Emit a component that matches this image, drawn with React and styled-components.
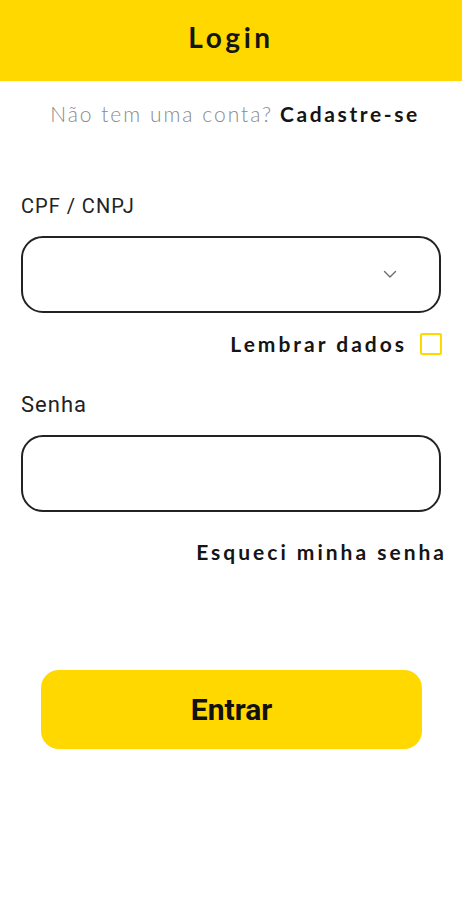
import React from 'react';
import styled, { createGlobalStyle } from 'styled-components';

const GlobalStyle = createGlobalStyle`
	html, body {
		margin: 0;
		padding: 0;
		background: #fff;
	}
	* {
		box-sizing: border-box;
	}
`;

function Chevron() {
	return (
		<svg width="14" height="9" viewBox="0 0 14 9" fill="none">
			<path d="M1.5 1.5L7 7l5.5-5.5" stroke="#6b6b6b" strokeWidth="1.4" strokeLinecap="round" strokeLinejoin="round" />
		</svg>
	);
}

function App() {
	return (
		<Root>
			<GlobalStyle />
			<Header>
				<h1>Login</h1>
			</Header>
			<SignUp>
				<span className="muted">Não tem uma conta?</span>
				<span className="link">Cadastre-se</span>
			</SignUp>
			<Form>
				<Label $top={68} $size={20}>CPF / CNPJ</Label>
				<Field>
					<Chevron />
				</Field>
				<Remember>
					<span>Lembrar dados</span>
					<CheckBox />
				</Remember>
				<Label $top={38} $size={22}>Senha</Label>
				<Field />
				<Forgot>Esqueci minha senha</Forgot>
			</Form>
			<Submit>Entrar</Submit>
		</Root>
	);
}

const Root = styled.div`
	width: 462px;
	min-height: 900px;
	background: #fff;
	display: flex;
	flex-direction: column;
`;

const Header = styled.div`
	height: 81px;
	background-color: #ffd800;
	display: flex;
	align-items: center;
	justify-content: center;

	h1 {
		margin: 0 0 8px 0;
		font-family: 'Lato', sans-serif;
		font-size: 28px;
		font-weight: 700;
		letter-spacing: 3.6px;
		color: #151515;
	}
`;

const SignUp = styled.div`
	margin-top: 21px;
	display: flex;
	justify-content: center;
	gap: 7px;
	padding-left: 8px;
	font-family: 'Lato', sans-serif;
	font-size: 21px;
	line-height: 24px;

	.muted {
		color: #8a8a8a;
		font-weight: 300;
		letter-spacing: 2px;
	}

	.link {
		color: #151515;
		font-weight: 700;
		letter-spacing: 2.6px;
	}
`;

const Form = styled.div`
	padding: 0 21px;
	display: flex;
	flex-direction: column;
`;

const Label = styled.div`
	margin-top: ${(p) => p.$top}px;
	font-family: 'Roboto', sans-serif;
	font-size: ${(p) => p.$size}px;
	line-height: 24px;
	letter-spacing: 1px;
	color: #222;
`;

const Field = styled.div`
	margin-top: 18px;
	height: 77px;
	border: 2px solid #222;
	border-radius: 22px;
	display: flex;
	align-items: center;
	justify-content: flex-end;
	padding-right: 42px;
`;

const Remember = styled.div`
	margin-top: 19px;
	display: flex;
	justify-content: flex-end;
	align-items: center;
	gap: 13px;
	font-family: 'Lato', sans-serif;
	font-size: 21px;
	line-height: 23px;
	font-weight: 700;
	letter-spacing: 3px;
	color: #151515;
	margin-right: -1px;
`;

const CheckBox = styled.div`
	width: 22px;
	height: 22px;
	border: 2px solid #ffd800;
	border-radius: 2px;
`;

const Forgot = styled.div`
	margin-top: 28px;
	margin-right: -6px;
	text-align: right;
	font-family: 'Lato', sans-serif;
	font-size: 21px;
	line-height: 23px;
	font-weight: 700;
	letter-spacing: 3px;
	color: #151515;
`;

const Submit = styled.button`
	margin: 107px 40px 0 41px;
	height: 79px;
	border: none;
	border-radius: 18px;
	background-color: #ffd800;
	font-family: 'Roboto', sans-serif;
	font-size: 30px;
	font-weight: 700;
	color: #111;
	cursor: pointer;
`;

export default App;
